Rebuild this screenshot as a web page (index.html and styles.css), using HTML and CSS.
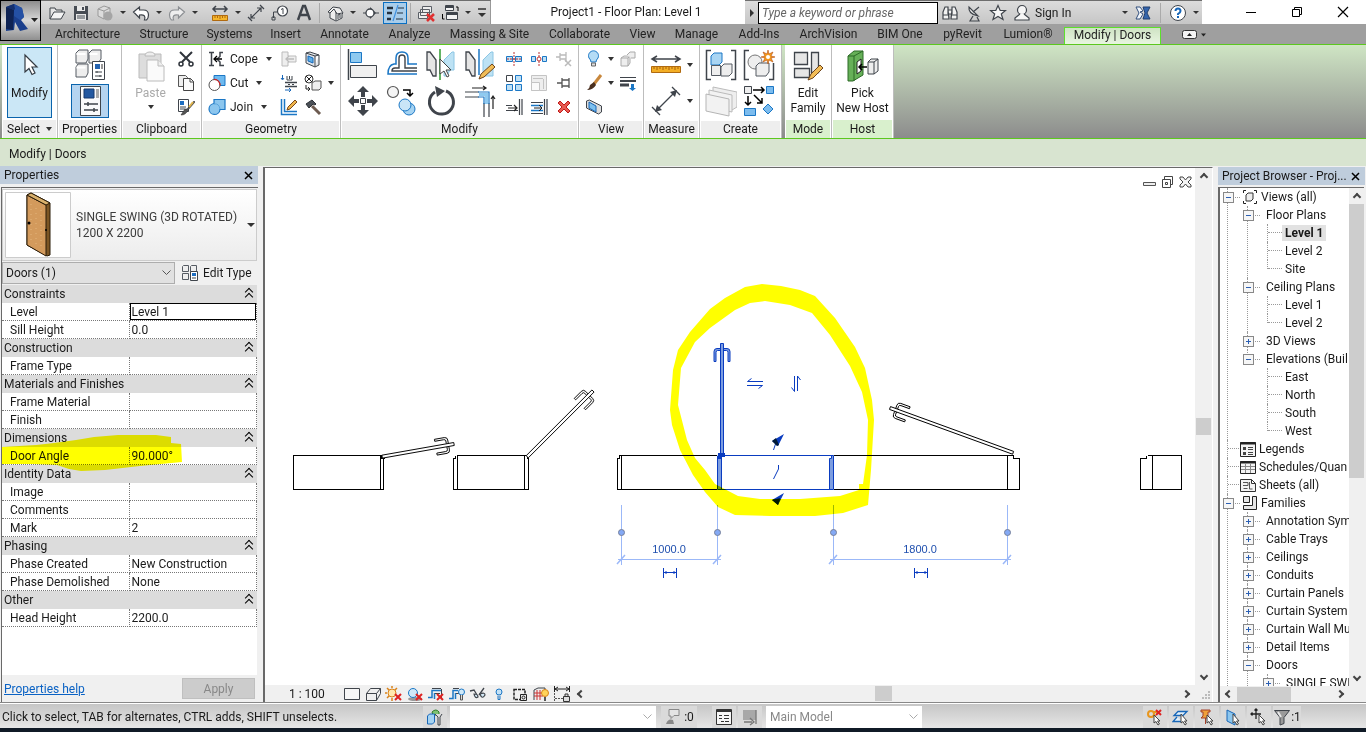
FILE: index.html
```
<!DOCTYPE html>
<html lang="en">
<head>
  <meta charset="UTF-8" />
  <meta name="viewport" content="width=device-width, initial-scale=1.0"/>
  <title>Project1 - Floor Plan: Level 1</title>
  <link rel="stylesheet" href="styles.css">
</head>
<body>
  <header class="top">
    <button class="app-button" aria-label="Application menu">
      <svg width="39" height="39" viewBox="0 0 39 39">
        <path d="M5 6l8-3 8 4 2 9-3 3 7 9-8 2-5-9-1 8-8 1z" fill="#1b3f8c"/>
        <path d="M5 6l8 3-1 20-7-1z" fill="#0f2353"/>
        <path d="M13 3l8 4 2 9-4 3-6-4z" fill="#2450a4"/>
        <path d="M5 6l8-3 1 5-1 1z" fill="#14306e"/>
        <path d="M30 17h7l-3.500 4z" fill="#222"/>
      </svg>
    </button>

    <div class="title-bar">
      <div class="quick">
        <button aria-label="Open"><svg class="i18" viewBox="0 0 18 18"><path d="M2 15V4h5l1 2h6v2" fill="#e6e6e6" stroke="#3f444b"/><path d="M2 15l4-7h11l-4 7z" fill="#f4f4f4" stroke="#3f444b"/></svg></button>
        <button aria-label="Save"><svg class="i18" viewBox="0 0 18 18"><path d="M2 2h14v14H2z" fill="#474c54"/><path d="M5 2h8v5H5zM4 10h10v6H4z" fill="#e9e9e9"/><path d="M5 12h8M5 14h8" stroke="#474c54"/><path d="M10 3h2v3h-2z" fill="#474c54"/></svg></button>
        <button aria-label="Synchronize"><svg class="i18" viewBox="0 0 18 18"><path d="M2 5l6-3 6 2v7l-6 4-6-3z" fill="#dcdcdc" stroke="#999"/><path d="M2 5l6 2 6-3M8 7v8" fill="none" stroke="#999"/><circle cx="12" cy="12" r="4.500" fill="#a5a5a5"/></svg></button>
        <button class="arr" aria-label="Synchronize options"></button>
        <button aria-label="Undo"><svg class="i18" viewBox="0 0 18 18"><path d="M1.500 8l6-5v3h4q5 0 5 5 0 3-2 5h-2q2-6-5-5v3z" fill="#fff" stroke="#3f444b" stroke-width="1.200"/></svg></button>
        <button class="arr" aria-label="Undo list"></button>
        <button aria-label="Redo"><svg class="i18" viewBox="0 0 18 18"><path d="M16.500 8l-6-5v3h-4q-5 0-5 5 0 3 2 5h2q-2-6 5-5v3z" fill="#eee" stroke="#8c8f93" stroke-width="1.200"/></svg></button>
        <button class="arr" aria-label="Redo list"></button>
        <span class="sep blank"></span>
        <button aria-label="Measure"><svg class="i18" viewBox="0 0 18 18"><path d="M2 5h14M5 2L2 5l3 3M13 2l3 3-3 3" fill="none" stroke="#3f444b" stroke-width="1.500"/><path d="M1.500 11.500h15v5h-15z" fill="#f5b62c" stroke="#b06a10"/><path d="M4 12v2M6.500 12v2M9 12v3M11.500 12v2M14 12v2" stroke="#b06a10"/></svg></button>
        <button class="arr" aria-label="Measure options"></button>
        <button aria-label="Aligned Dimension"><svg class="i18" viewBox="0 0 18 18"><path d="M4 14L14 4M1 13l4 4M13 1l4 4M4 10v4h4M10 4h4v4" fill="none" stroke="#3f444b" stroke-width="1.200"/></svg></button>
        <button aria-label="Tag by Category"><svg class="i18" viewBox="0 0 18 18"><circle cx="11.500" cy="7" r="5" fill="#fff" stroke="#3f444b" stroke-width="1.200"/><path d="M10 5.500l2-1v5.500" fill="none" stroke="#3f444b"/><path d="M6.500 8H2.500v6M1 13h3v3H1z" fill="none" stroke="#3f444b"/></svg></button>
        <button aria-label="Text"><svg class="i18" viewBox="0 0 18 18"><path d="M3 16L8 2h2l5 14M5.500 11h7" fill="none" stroke="#3f444b" stroke-width="2.400"/></svg></button>
        <span class="sep"></span>
        <button aria-label="Default 3D View"><svg class="i18" viewBox="0 0 18 18"><path d="M2 8l5-5 7 1 3 5-1 1v4l-6 3-6-3V9z" fill="#eee" stroke="#3f444b"/><path d="M10 8v8M4 9l4-4 3 5 5-1M12 15v-4l2-1v4" fill="none" stroke="#3f444b"/></svg></button>
        <button class="arr" aria-label="3D options"></button>
        <button aria-label="Section"><svg class="i18" viewBox="0 0 18 18"><path d="M8 3l6 6-6 6z" fill="#3f444b"/><circle cx="8" cy="9" r="4" fill="#fff" stroke="#3f444b" stroke-width="1.300"/><path d="M1 9h3M13 9h4" stroke="#3f444b"/></svg></button>
        <button class="on" aria-label="Thin Lines"><svg class="i18" viewBox="0 0 18 18"><path d="M1 4h6M1 9h5M1 15h4" stroke="#25303c" stroke-width="2.500"/><path d="M12 4h6M11 9h6M10 15h7" stroke="#25303c"/><path d="M12 1L7 17" stroke="#3d8fe0" stroke-width="1.200"/></svg></button>
        <span class="sep"></span>
        <button aria-label="Close Hidden Windows"><svg class="i18" viewBox="0 0 18 18"><path d="M5.500 2.500h9v6h-9zM3.500 5.500h9v6h-9zM1.500 8.500h9v6h-9z" fill="#eee" stroke="#5a5f66"/><path d="M10 10l7 7M17 10l-7 7" stroke="#e03030" stroke-width="2.500"/></svg></button>
        <button aria-label="Switch Windows"><svg class="i18" viewBox="0 0 18 18"><path d="M4.500 1.500h8v5h-8zM5.500 8.500h11v7h-11z" fill="#f4f4f4" stroke="#3f444b"/><path d="M4 3h9M5 10h12" stroke="#3f444b" stroke-width="2"/><path d="M15 3h2v4M1.500 10v5h2" fill="none" stroke="#000"/></svg></button>
        <button class="arr" aria-label="Window list"></button>
        <button class="custom" aria-label="Customize"><svg width="12" height="12" viewBox="0 0 12 12"><path d="M2 2h8" stroke="#333" stroke-width="1.500"/><path d="M2 6h8l-4 4z" fill="#333"/></svg></button>
      </div>
      <h1>Project1 - Floor Plan: Level 1</h1>
      <div class="search">
        <button class="go" aria-label="Expand search"><svg width="6" height="8" viewBox="0 0 6 8"><path d="M1 0l4 4-4 4z" fill="#333"/></svg></button>
        <input type="text" placeholder="Type a keyword or phrase" aria-label="Search help">
        <button aria-label="Search"><svg class="i18" viewBox="0 0 18 18"><path d="M4 3h3v3l1 9H2L2 8zM11 3h3l2 5v7h-6l1-9zM7 6h4v4H7z" fill="#f2f2f2" stroke="#3f444b" stroke-width="1.200"/><path d="M2 11h6M10 11h6" stroke="#3f444b"/></svg></button>
        <button aria-label="Subscription"><svg class="i18" viewBox="0 0 18 18"><path d="M4 3q-1 7 9 9z" fill="#eee" stroke="#3f444b" stroke-width="1.200"/><path d="M8 8l6-5M8 12l-3 5h9l-2-4" fill="none" stroke="#3f444b" stroke-width="1.200"/></svg></button>
        <button aria-label="Favorites"><svg class="i18" viewBox="0 0 18 18"><path d="M9 1.500l2.200 5h5.300l-4.200 3.500 1.700 5.500L9 12.500 4 15.500 5.700 10 1.500 6.500h5.300z" fill="#f6f6f6" stroke="#3f444b" stroke-width="1.200"/></svg></button>
        <button class="sign">
          <svg class="i18" viewBox="0 0 18 18"><circle cx="9" cy="6" r="4.500" fill="#f6f6f6" stroke="#3f444b" stroke-width="1.200"/><path d="M7 10l-5 4v2h14v-2l-5-4" fill="#f6f6f6" stroke="#3f444b" stroke-width="1.200"/></svg>
          Sign In
        </button>
        <button class="arr" aria-label="Account options"></button>
        <button aria-label="Exchange"><svg class="i18" viewBox="0 0 18 18"><path d="M2 3h4l3 4-3 1 3 2-3 5H2l3-6z" fill="#f2f6fb" stroke="#33507e"/><path d="M9 3h7l-3 6 3 6H9l2-6z" fill="#3465ad" stroke="#213f70"/></svg></button>
        <span class="sep"></span>
        <button aria-label="Help"><svg class="i18" viewBox="0 0 18 18"><circle cx="9" cy="9" r="7.500" fill="#fff" stroke="#3f444b"/><path d="M6.500 7q0-2.500 2.500-2.500T11.500 7q0 1.500-2.500 3v1" fill="none" stroke="#1766b8" stroke-width="2"/><path d="M8 12h2v2H8z" fill="#1766b8"/></svg></button>
        <button class="arr" aria-label="Help options"></button>
      </div>
      <div class="window-buttons">
        <button aria-label="Minimize"><svg width="12" height="12" viewBox="0 0 12 12"><path d="M1 6.500h10" stroke="#000"/></svg></button>
        <button aria-label="Restore"><svg width="12" height="12" viewBox="0 0 12 12"><path d="M1.500 3.500h7v7h-7zM3.500 3V1.500h7v7H9" fill="none" stroke="#000"/></svg></button>
        <button aria-label="Close"><svg width="12" height="12" viewBox="0 0 12 12"><path d="M1 1l10 10M11 1L1 11" stroke="#000" stroke-width="1.200"/></svg></button>
      </div>
    </div>

    <nav class="tabs">
      <a href="#">Architecture</a>
      <a href="#">Structure</a>
      <a href="#">Systems</a>
      <a href="#">Insert</a>
      <a href="#">Annotate</a>
      <a href="#">Analyze</a>
      <a href="#">Massing &amp; Site</a>
      <a href="#">Collaborate</a>
      <a href="#">View</a>
      <a href="#">Manage</a>
      <a href="#">Add-Ins</a>
      <a href="#">ArchVision</a>
      <a href="#">BIM One</a>
      <a href="#">pyRevit</a>
      <a href="#">Lumion®</a>
      <a href="#" class="active">Modify | Doors</a>
      <button class="collapse" aria-label="Collapse ribbon"><svg width="26" height="10" viewBox="0 0 26 10"><rect x=".5" y=".5" width="14" height="8" rx="2" fill="#f4f4f4" stroke="#333"/><path d="M5 6h5L7.500 3zM19 3.500h5l-2.500 3z" fill="#222"/></svg></button>
    </nav>
  </header>

  <div class="ribbon">
    <section class="panel p-select">
      <div class="panel-body">
        <button class="big pressed">
          <svg class="i32" viewBox="0 0 32 32"><path d="M11 5v17l4-3.500 3 6 3-1.500-3-6h5z" fill="#fff" stroke="#333a42" stroke-width="1.200"/></svg>
          <span>Modify</span>
        </button>
      </div>
      <h2>Select <i class="caret"></i></h2>
    </section>

    <section class="panel p-props">
      <div class="panel-body stack">
        <button aria-label="Type Properties"><svg class="i32" viewBox="0 0 32 32"><path d="M2 4l3-3h9v9l-2 4H2zM15 4l3-3h9v9l-3 4h-9zM2 18l2-3h10v9l-2 4H2z" fill="#eee" stroke="#555b63"/><path d="M2.500 5h9M15.500 5h8M2.500 18.500h9" fill="none" stroke="#fff" stroke-width="2"/><path d="M18.500 12.500h12v18h-12z" fill="#fff" stroke="#3f444b"/><path d="M21 15h5v5h-5z" fill="#2563b0"/><path d="M27 15h2v5h-2z" fill="#999"/><path d="M21 23h7M21 27h7M23 22v2M26 26v2" stroke="#3f444b"/></svg></button>
        <button class="pressed wide" aria-label="Properties"><svg class="i32" viewBox="0 0 32 32"><path d="M6.500 1.500h20v29h-20z" fill="#fafafa" stroke="#3f444b"/><path d="M10 4h10v9H10z" fill="#2358a0" stroke="#17396c"/><path d="M22 4h3v9h-3z" fill="#aaa"/><path d="M10 19h14M10 25h14M14 17v4M20 23v4" stroke="#3f444b" stroke-width="1.500"/></svg></button>
      </div>
      <h2>Properties</h2>
    </section>

    <section class="panel p-clip">
      <div class="panel-body">
        <button class="big off">
          <svg class="i32" viewBox="0 0 32 32"><path d="M4 4h22v24H4z" fill="#ddd" stroke="#bbb"/><path d="M10 6q0-4 5-4t5 4z" fill="#eee" stroke="#bbb"/><path d="M12 10h11l6 6v15H12z" fill="#fafafa" stroke="#bcbcbc"/><path d="M23 10v6h6" fill="#eee" stroke="#bcbcbc"/></svg>
          <span>Paste</span>
          <i class="caret"></i>
        </button>
        <div class="col">
          <button aria-label="Cut to Clipboard"><svg class="i18" viewBox="0 0 18 18"><path d="M3 2l10 10M15 2L5 12" stroke="#2f343b" stroke-width="2"/><circle cx="4" cy="14" r="2" fill="#fff" stroke="#2f343b" stroke-width="1.500"/><circle cx="14" cy="14" r="2" fill="#fff" stroke="#2f343b" stroke-width="1.500"/></svg></button>
          <button aria-label="Copy to Clipboard"><svg class="i18" viewBox="0 0 18 18"><path d="M1.500 1.500h7l2 2v9h-9z" fill="#eee" stroke="#555"/><path d="M6.500 4.500h7l3 3v9h-10z" fill="#fafafa" stroke="#444"/><path d="M13 4v4h4" fill="none" stroke="#444"/></svg></button>
          <button aria-label="Match Type"><svg class="i18" viewBox="0 0 18 18"><path d="M1.500 1.500h10v12h-10z" fill="#fff" stroke="#3f444b"/><path d="M3 3h4v4H3z" fill="#1d6dc0"/><path d="M3 9h6M3 11h5" stroke="#3f444b"/><path d="M17 3l-7 8-2 0-4 6q5 0 7-5l7-8z" fill="#555" stroke="#333" stroke-width=".6"/><path d="M16 4l-4 5" stroke="#e1b64c" stroke-width="2"/></svg></button>
        </div>
      </div>
      <h2>Clipboard</h2>
    </section>

    <section class="panel p-geo">
      <div class="panel-body">
        <div class="col labelled">
          <button><svg class="i18" viewBox="0 0 18 18"><path d="M1 2.500h5M1 15.500h5M3.500 2v14M15 2.500h-3v4l-3 2.500 3 3v3.500h4" fill="none" stroke="#3f444b" stroke-width="1.500"/><path d="M14 9H6M9 6L6 9l3 3" fill="none" stroke="#000" stroke-width="1.300"/></svg>Cope <i class="caret"></i></button>
          <button><svg class="i18" viewBox="0 0 18 18"><path d="M6 1.500h11v10H6z" fill="#6db9ef" stroke="#1b77c5"/><circle cx="6.500" cy="11" r="5.500" fill="#fff" stroke="#555"/><path d="M6 5.500a5.500 5.500 0 0 1 6 6" fill="none" stroke="#c22" stroke-width="1.300"/></svg>Cut <i class="caret"></i></button>
          <button><svg class="i18" viewBox="0 0 18 18"><path d="M6 1.500h11v10h-5a5.500 5.500 0 1 1-6-6z" fill="#8cc6ee" stroke="#1b77c5" stroke-width="1.200"/><path d="M6 6q5-1 6 5" fill="none" stroke="#5ba6dc"/></svg>Join <i class="caret"></i></button>
        </div>
        <div class="col">
          <button aria-label="Wall Joins"><svg class="i18" viewBox="0 0 18 18"><path d="M2 2h6v4h8v6H8v4H2z" fill="#eee" stroke="#bbb"/><path d="M14 9H7M9 6L6 9l3 3" fill="none" stroke="#bbb" stroke-width="1.300"/></svg></button>
          <button aria-label="Split Face"><svg class="i18" viewBox="0 0 18 18"><path d="M5 8.500h12M5 12.500h12" stroke="#3f444b" stroke-width="1.500"/><path d="M8 10.500h2M12 10.500h2M7 2v4h5V2M9.500 2v3" fill="none" stroke="#3f444b"/><path d="M2.500 1v4M1 4l1.500 2L4 4M5 16h5M9 14l2 2-2 2" fill="none" stroke="#1766b8"/></svg></button>
          <button aria-label="Paint"><svg class="i18" viewBox="0 0 18 18"><path d="M1.500 1v15.500H17M4.500 1v12.500H17" fill="none" stroke="#1b77c5" stroke-width="1.500"/><path d="M7 12l1-3 7-7 2 2-7 7z" fill="#f0b54a" stroke="#7a4a1a"/></svg></button>
        </div>
        <div class="col">
          <button aria-label="Wall Opening"><svg class="i18" viewBox="0 0 18 18"><path d="M2 3l9 3V17L2 13zM2 3l4-1 9 3-4 1M15 5v10l-4 2" fill="#dfe3e8" stroke="#3f444b"/><path d="M4 6l5 2v5l-5-2z" fill="#5fb0ea" stroke="#1766b8"/></svg></button>
          <button aria-label="Beam joins"><svg class="i18" viewBox="0 0 18 18"><circle cx="5" cy="5" r="4" fill="#fff" stroke="#333"/><path d="M2 2l6 6M8 2L2 8M2 11v4h3M4 13l2 2-2 2" fill="none" stroke="#222"/><path d="M8 9l3-2h6v7l-2 2H8z" fill="#eee" stroke="#555"/></svg></button>
          <button aria-label="Demolish"><svg class="i18" viewBox="0 0 18 18"><path d="M2 6l6-4 4 4-1 1-2-1-4 4z" fill="#4a4f56" stroke="#2e3238"/><path d="M8 8l8 8" stroke="#6d5b50" stroke-width="3"/></svg></button>
        </div>
        <i class="caret side"></i>
      </div>
      <h2>Geometry</h2>
    </section>

    <section class="panel p-modify">
      <div class="panel-body">
        <div class="big-grid four">
          <button aria-label="Align"><svg class="i32" viewBox="0 0 32 32"><path d="M1.500 0v31" stroke="#3f444b" stroke-width="1.500"/><path d="M3.500 3.500h11v10h-11z" fill="#8fcaf0" stroke="#1b77c5"/><path d="M3.500 16.500h26v12h-26z" fill="#f0f0f0" stroke="#3f444b"/></svg></button>
          <button aria-label="Offset"><svg class="i32" viewBox="0 0 32 32"><path d="M31 15h-9V9q0-6-6-6t-6 6v6H8q-6 1-6 10h29" fill="none" stroke="#1b77c5" stroke-width="1.500"/><path d="M31 19H19V9q0-3-3-3t-3 3v10h-4q-3 0-3 3h25" fill="none" stroke="#3f444b" stroke-width="1.400"/></svg></button>
          <button aria-label="Mirror - Pick Axis"><svg class="i32" viewBox="0 0 32 32"><path d="M2 3h3l6 8v16H8l-3-6H2z" fill="#e5e5e5" stroke="#3f444b" stroke-width="1.300"/><path d="M29 3h-2l-8 8v16h3l3-6h4z" fill="#bde2f4" stroke="#8cc6e4"/><path d="M15 0v31" stroke="#2f9b30" stroke-width="1.500"/><path d="M15 10v15l4-3 3 6 2-1-3-6h5z" fill="#fff" stroke="#444"/></svg></button>
          <button aria-label="Mirror - Draw Axis"><svg class="i32" viewBox="0 0 32 32"><path d="M2 3h3l6 8v16H8l-3-6H2z" fill="#e5e5e5" stroke="#3f444b" stroke-width="1.300"/><path d="M29 3h-2l-8 8v16h10z" fill="#bde2f4" stroke="#8cc6e4"/><path d="M15 0v26" stroke="#1b77c5" stroke-width="1.500"/><path d="M15 30l2-5 11-10 3 3-11 10z" fill="#f2bd57" stroke="#70451c"/></svg></button>
          <button aria-label="Move"><svg class="i32" viewBox="0 0 32 32"><path d="M16 1l6 6h-4v5h-4V7h-4zM16 31l6-6h-4v-5h-4v5h-4zM1 16l6-6v4h5v4H7v4zM31 16l-6-6v4h-5v4h5v4z" fill="#3f444b"/><path d="M13.500 13.500h5v5h-5z" fill="#fff" stroke="#3f444b"/></svg></button>
          <button aria-label="Copy"><svg class="i32" viewBox="0 0 32 32"><circle cx="7" cy="7" r="5.500" fill="#f4f4f4" stroke="#555" stroke-width="1.200"/><circle cx="23" cy="24" r="6" fill="#a5d3f2" stroke="#1b77c5"/><circle cx="19" cy="20" r="6" fill="#c9e5f7" stroke="#1b77c5"/><path d="M17 5h7v6M21 8l3 3 3-3" fill="none" stroke="#000" stroke-width="1.500"/></svg></button>
          <button aria-label="Rotate"><svg class="i32" viewBox="0 0 32 32"><path d="M10 7a12 12 0 1 0 11-1" fill="none" stroke="#3f444b" stroke-width="3"/><path d="M10 1l10 5-8 6z" fill="#3f444b"/></svg></button>
          <button aria-label="Trim/Extend to Corner"><svg class="i32" viewBox="0 0 32 32"><path d="M1 7h14M1 12h14M20 18v14M25 18v14" stroke="#3f444b" stroke-width="1.200"/><path d="M14 7h11v12M14 12h6v7" fill="none" stroke="#1b77c5" stroke-width="1.200"/><path d="M15 9.500h7.500V19" fill="none" stroke="#8fcaf0" stroke-width="3"/><path d="M8 3h14M19 1l3 2-3 2M29 24V11M27 14l2-3 2 3" fill="none" stroke="#222" stroke-width="1.200"/></svg></button>
        </div>
        <div class="small-grid">
          <button aria-label="Split Element"><svg class="i18" viewBox="0 0 18 18"><path d="M1.500 6.500h6v5h-6zM10.500 6.500h6v5h-6z" fill="#bfe0f5" stroke="#1b77c5"/><path d="M9 2v14M2 9h14" stroke="#b33" stroke-dasharray="2 1"/></svg></button>
          <button aria-label="Split with Gap"><svg class="i18" viewBox="0 0 18 18"><path d="M1.500 6.500h4v5h-4zM12.500 6.500h4v5h-4z" fill="#bfe0f5" stroke="#1b77c5"/><path d="M9 2v14" stroke="#b33" stroke-dasharray="2 1"/><circle cx="9" cy="9" r="2" fill="#fff" stroke="#b33"/></svg></button>
          <button aria-label="Unpin"><svg class="i18" viewBox="0 0 18 18"><path d="M1 7h4M5 3v8M5 5h6M5 9h6M11 2v10" fill="none" stroke="#bbb" stroke-width="1.300"/><path d="M10 10l6 6M16 10l-6 6" stroke="#bbb" stroke-width="1.500"/></svg></button>
          <button aria-label="Array"><svg class="i18" viewBox="0 0 18 18"><path d="M1.500 1.500h6v6h-6z" fill="#fff" stroke="#3f444b"/><path d="M10.500 1.500h6v6h-6zM1.500 10.500h6v6h-6zM10.500 10.500h6v6h-6z" fill="#bfe0f5" stroke="#1b77c5"/></svg></button>
          <button aria-label="Scale"><svg class="i18" viewBox="0 0 18 18"><path d="M1.500 1.500h15v15h-15z" fill="#eee" stroke="#c4c4c4"/><path d="M1.500 8.500h8v8h-8zM3 4.500h10M13.500 5v10" fill="#fafafa" stroke="#c4c4c4"/></svg></button>
          <button aria-label="Pin"><svg class="i18" viewBox="0 0 18 18"><path d="M2 9h5M7 4v10M7 6h7M7 12h7M14 4v10" fill="none" stroke="#555" stroke-width="1.300"/></svg></button>
          <button aria-label="Trim/Extend Single"><svg class="i18" viewBox="0 0 18 18"><path d="M1 7.500h6M1 12.500h12M14.500 1v16M17 1v16" stroke="#3f444b" stroke-width="1.200"/><path d="M3 10h8M9 7l3 3-3 3" fill="none" stroke="#222" stroke-width="1.200"/></svg></button>
          <button aria-label="Trim/Extend Multiple"><svg class="i18" viewBox="0 0 18 18"><path d="M1 4.500h12M1 15.500h12M14.500 1v16M17 1v16" stroke="#3f444b" stroke-width="1.200"/><path d="M1 7.500h12M1 12.500h12" stroke="#1b77c5" stroke-width="1.500"/><path d="M4 10h7M9 7l3 3-3 3" fill="none" stroke="#222"/></svg></button>
          <button aria-label="Delete"><svg class="i18" viewBox="0 0 18 18"><path d="M3 5l2-2 4 4 4-4 2 2-4 4 4 4-2 2-4-4-4 4-2-2 4-4z" fill="#e85a50" stroke="#c01a1a"/></svg></button>
        </div>
      </div>
      <h2>Modify</h2>
    </section>

    <section class="panel p-view">
      <div class="panel-body">
        <div class="col">
          <button aria-label="Hide in View"><svg class="i18" viewBox="0 0 18 18"><path d="M6 12q0-2-2-4a5 5 0 1 1 9 0q-2 2-2 4z" fill="#b4dcf6" stroke="#1b77c5"/><path d="M6.500 13h4v3h-4z" fill="#ddd" stroke="#666"/></svg></button>
          <button aria-label="Override Graphics"><svg class="i18" viewBox="0 0 18 18"><path d="M16 1l-7 9" stroke="#c8873c" stroke-width="3"/><path d="M9 8l2 3q-3 5-9 5 3-2 3-5z" fill="#4a3020"/></svg></button>
          <button aria-label="Selection Box"><svg class="i18" viewBox="0 0 18 18"><path d="M1.500 3l3-1 12 6v6l-3 2-12-6z" fill="#ddd" stroke="#3f444b"/><path d="M4 4l7 4v6l-7-4z" fill="#7dc0ee" stroke="#1766b8"/></svg></button>
        </div>
        <div class="carets"><i class="caret"></i><i class="caret"></i></div>
        <div class="col">
          <button aria-label="Displace"><svg class="i18" viewBox="0 0 18 18"><path d="M2 8l3-2h6v7l-2 3H2zM2 8h7v8M9 8l2-2" fill="#eee" stroke="#aaa"/><path d="M8 5l3-3h5v6h-4" fill="#eee" stroke="#aaa"/></svg></button>
          <button aria-label="Linework"><svg class="i18" viewBox="0 0 18 18"><path d="M1 3.500h16" stroke="#3f444b"/><path d="M1 7h16" stroke="#3f444b" stroke-width="2"/><path d="M1 11h9" stroke="#3f444b" stroke-width="3"/><path d="M12 10h3v4h2l-3.500 3-3.500-3h2z" fill="#1b77c5"/></svg></button>
        </div>
      </div>
      <h2>View</h2>
    </section>

    <section class="panel p-measure">
      <div class="panel-body">
        <div class="big-grid">
          <button aria-label="Measure distance"><svg class="i32" viewBox="0 0 32 32"><path d="M2 10h28M7 7l-5 3 5 3M25 7l5 3-5 3" fill="none" stroke="#3f444b" stroke-width="1.500"/><path d="M1.500 17.500h29v6h-29z" fill="#f3ae25" stroke="#b06a10"/><path d="M4 18v2M7 18v3M10 18v2M13 18v3M16 18v2M19 18v3M22 18v2M25 18v3M28 18v2" stroke="#a55f0a"/></svg></button>
          <button aria-label="Dimension"><svg class="i32" viewBox="0 0 32 32"><path d="M6 26L26 6M2 22l8 8M22 2l8 8" stroke="#3f444b" stroke-width="1.300"/><path d="M5 27l2-7 5 5zM27 5l-7 2 5 5z" fill="#3f444b"/></svg></button>
        </div>
        <div class="carets"><i class="caret"></i><i class="caret"></i></div>
      </div>
      <h2>Measure</h2>
    </section>

    <section class="panel p-create">
      <div class="panel-body">
        <div class="big-grid two">
          <button aria-label="Create Group"><svg class="i32" viewBox="0 0 32 32"><path d="M6 1.500H1.500v29H6M26 1.500h4.500v29H26" fill="none" stroke="#3f444b" stroke-width="1.500"/><path d="M6 7l3-3h8v9l-3 3H6z" fill="#a9d5f3" stroke="#1b77c5"/><path d="M6.500 16.500h9v10h-9zM16 18l3-3h8v9l-3 3h-8z" fill="#eee" stroke="#555b63"/></svg></button>
          <button aria-label="Create Similar"><svg class="i32" viewBox="0 0 32 32"><path d="M6 1.500H1.500v29H6M26 30.500h4.500V14" fill="none" stroke="#3f444b" stroke-width="1.500"/><circle cx="12" cy="13" r="7" fill="#eee" stroke="#777"/><path d="M13 17l3-3h10v9l-3 4H13z" fill="#eee" stroke="#555b63"/><path d="M25 1l1 4 4-2-2 4 4 1-4 1 2 4-4-2-1 4-1-4-4 2 2-4-4-1 4-1-2-4 4 2z" fill="#f59a1c" stroke="#b64d10" stroke-width=".6"/><circle cx="25" cy="8" r="2" fill="#fff"/></svg></button>
          <button aria-label="Create Assembly"><svg class="i32" viewBox="0 0 32 32"><path d="M8 2l24 5v15l-5 3L8 20z" fill="#eee" stroke="#bbb"/><path d="M4 5l23 5v17l-23-5z" fill="#f2f2f2" stroke="#bbb"/><path d="M1 9l23 5v17L1 26z" fill="#f2f2f2" stroke="#b5b5b5"/></svg></button>
          <button aria-label="Create Parts"><svg class="i32" viewBox="0 0 32 32"><path d="M1.500 1.500h7v7h-7z" fill="#eee" stroke="#3f444b"/><path d="M23.500 1.500h7v7h-7zM1.500 23.500h11v7h-11zM25 19l5 5-5 5-5-5z" fill="#7cbcee" stroke="#1b77c5"/><path d="M10 5h11M18 2l3 3-3 3M5 11v9M2 17l3 3 3-3M11 10l8 8M19 13v5h-5" fill="none" stroke="#000" stroke-width="1.500"/></svg></button>
        </div>
      </div>
      <h2>Create</h2>
    </section>

    <section class="panel green p-mode">
      <div class="panel-body">
        <button class="big">
          <svg class="i32" viewBox="0 0 32 32"><path d="M2.500 2.500h13v12h-13zM19.500 2.500h7v20h-7zM2.500 18.500h15v9h-15z" fill="#e6e6e6" stroke="#3f444b" stroke-width="1.300"/><path d="M16 30l3-6 9-9 3 3-10 10z" fill="#f2bd57" stroke="#70451c"/></svg>
          <span>Edit<br>Family</span>
        </button>
      </div>
      <h2>Mode</h2>
    </section>

    <section class="panel green p-host">
      <div class="panel-body">
        <button class="big">
          <svg class="i32" viewBox="0 0 32 32"><path d="M1 6l6-5h9v24l-10 6H1z" fill="#66b058" stroke="#2c6b26"/><path d="M1 6h6v25M7 6l9-5" fill="none" stroke="#2c6b26"/><path d="M10 12l4-3v12l-4 3z" fill="#fff" stroke="#222"/><path d="M20 17h-8M15 14l-3 3 3 3" fill="none" stroke="#000" stroke-width="1.500"/><path d="M21 12l3-3h7v12l-4 3h-6z" fill="#eee" stroke="#3f444b"/><path d="M21 12h6v12M27 12l4-3" fill="none" stroke="#3f444b"/></svg>
          <span>Pick<br>New Host</span>
        </button>
      </div>
      <h2>Host</h2>
    </section>
  </div>

  <div class="options-bar">Modify | Doors</div>

  <main class="work">
    <aside class="palette">
      <div class="palette-title">Properties <button aria-label="Close Properties"><svg width="9" height="9" viewBox="0 0 9 9"><path d="M1 1l7 7M8 1L1 8" stroke="#000" stroke-width="1.500"/></svg></button></div>
      <div class="palette-box">
        <button class="type-selector">
          <svg width="66" height="66" viewBox="0 0 66 66"><path d="M.5 .5h65v65H.5z" fill="#fff" stroke="#ccc"/><path d="M22 3l4-2 19 10v52l-3 1-20-11z" fill="#7b5524" stroke="#2b1c08"/><path d="M22 3l19 10v51L22 53z" fill="#d39a5c" stroke="#2b1c08"/><path d="M22 3l4-2 19 10-4 2z" fill="#d8b06c" stroke="#2b1c08"/><path d="M26 12v38M31 16v36M36 18v38" stroke="#e3b57d" stroke-dasharray="1 4"/><circle cx="24" cy="31" r="1.500"/><circle cx="41" cy="38" r="1"/></svg>
          <span>SINGLE SWING (3D ROTATED)<br>1200 X 2200</span>
          <i class="caret"></i>
        </button>
        <div class="filter-row">
          <div class="combo">
            <select aria-label="Properties filter"><option>Doors (1)</option></select>
            <svg width="9" height="6" viewBox="0 0 9 6"><path d="M.5 .5l4 4 4-4" fill="none" stroke="#555"/></svg>
          </div>
          <button class="edit-type">
            <svg class="i18" viewBox="0 0 18 18"><path d="M1.500 2.500l1-1h5v6h-6zM9.500 2.500l1-1h5v6h-6zM1.500 9.500h6v6h-6z" fill="#eee" stroke="#555b63"/><path d="M9.500 7.500h7v9h-7z" fill="#fff" stroke="#3f444b"/><path d="M11 9h4v3h-4z" fill="#1d6dc0"/><path d="M11 14h4" stroke="#3f444b"/></svg>
            Edit Type
          </button>
        </div>
        <div class="props-scroll">
          <table class="props">
            <tr class="group"><th colspan="2">Constraints <button aria-label="Collapse Constraints"></button></th></tr>
            <tr><td><label for="level">Level</label></td><td><input id="level" class="focus" value="Level 1"></td></tr>
            <tr><td><label for="sill">Sill Height</label></td><td><input id="sill" value="0.0"></td></tr>
            <tr class="group"><th colspan="2">Construction <button aria-label="Collapse Construction"></button></th></tr>
            <tr><td><label for="frame-type">Frame Type</label></td><td><input id="frame-type"></td></tr>
            <tr class="group"><th colspan="2">Materials and Finishes <button aria-label="Collapse Materials"></button></th></tr>
            <tr><td><label for="frame-mat">Frame Material</label></td><td><input id="frame-mat"></td></tr>
            <tr><td><label for="finish">Finish</label></td><td><input id="finish"></td></tr>
            <tr class="group"><th colspan="2">Dimensions <button aria-label="Collapse Dimensions"></button></th></tr>
            <tr><td><label for="angle">Door Angle</label></td><td><input id="angle" value="90.000°"></td></tr>
            <tr class="group"><th colspan="2">Identity Data <button aria-label="Collapse Identity Data"></button></th></tr>
            <tr><td><label for="image">Image</label></td><td><input id="image"></td></tr>
            <tr><td><label for="comments">Comments</label></td><td><input id="comments"></td></tr>
            <tr><td><label for="mark">Mark</label></td><td><input id="mark" value="2"></td></tr>
            <tr class="group"><th colspan="2">Phasing <button aria-label="Collapse Phasing"></button></th></tr>
            <tr><td><label for="created">Phase Created</label></td><td><input id="created" value="New Construction"></td></tr>
            <tr><td><label for="demolished">Phase Demolished</label></td><td><input id="demolished" value="None"></td></tr>
            <tr class="group"><th colspan="2">Other <button aria-label="Collapse Other"></button></th></tr>
            <tr><td><label for="head">Head Height</label></td><td><input id="head" value="2200.0"></td></tr>
          </table>
          <svg class="marker" width="184" height="40" viewBox="0 0 184 40"><path d="M0 14l34-2 18-2 22-3 18-3 24-2h38l15 2v6l10 1 1 18-42 4-35 4-24 1-12-2-12-4-24-1H0z" fill="#ff0"/></svg>
        </div>
        <div class="palette-foot">
          <a href="#">Properties help</a>
          <button disabled>Apply</button>
        </div>
      </div>
    </aside>

    <section class="view">
      <div class="canvas">
        <svg class="drawing" width="931" height="518" viewBox="265 168 931 518">
          <defs>
            <!-- lever pair, tip of the leaf at the origin, leaf running down -->
            <path id="handle" d="M-1.500 7.500h-3q-1.500 0-1.500 2v9h-2v-10q0-3 3-3h10q3 0 3 3v10h-2v-9q0-2-1.500-2h-3"/>
          </defs>
          <g fill="none" stroke="#000" shape-rendering="crispEdges">
            <path d="M293.500 455.500h90v34h-90zM380.500 456v33"/>
            <path d="M456.500 455.500h71v3h1v31h-75v-31h2v-3M457.500 456v33M524.500 456v33"/>
            <path d="M717 455.500h-98v3h-1.500v31H717M621.500 456v33"/>
            <path d="M834 455.500h179.500v3h6v31H834M1007.500 456v33"/>
            <path d="M1147.500 455.500h34v34h-41v-31h6v-3M1152.500 456v33"/>
          </g>
          <path d="M381 455h4v4h-4z"/>
          <g fill="#fff" stroke="#000" stroke-width=".9">
            <g transform="translate(454 444) rotate(80)"><use href="#handle"/><path d="M-1.500 0h3v73h-3z"/></g>
            <g transform="translate(593 391) rotate(45)"><use href="#handle"/><path d="M-1.500 0h3v93h-3z"/></g>
            <g transform="translate(890 408) rotate(-70)"><use href="#handle"/><path d="M-1.500 0h3v131h-3z"/></g>
          </g>
          <g fill="#7d9de0" stroke="#0a3cc0">
            <path d="M718 455.500h115M718 489.500h115" fill="none"/>
            <path d="M717.500 456h4v33.500h-4zM829.500 458.500h2v-3h2v34h-4z"/>
            <g transform="translate(722 343)"><use href="#handle"/><path d="M-1.500 .5h3v112h-3z"/></g>
          </g>
          <path d="M718 453h7v4h-3v2h-4z" fill="#0a3cc0"/>
          <g fill="none" stroke="#0a3cc0">
            <path d="M763 381.500h-15.500l4-3M747 385.500h15.500l-4 3"/>
            <path d="M794.500 376v15.500l-3-4M797.500 391v-15l3 4"/>
            <path d="M778.500 465v4l-5 10M773.500 450l2-6"/>
          </g>
          <path d="M772 441l12-7-6 12zM772 500l12-7-6 12z" fill="#0a3cc0"/>
          <path d="M772 441l4-3 3 7-2 1zM772 500l8-2-2 7z" fill="#001a38"/>
          <g stroke="#9bb8f8" fill="none">
            <path d="M621.500 505v60M717.500 505v60M833.500 505v60M1007.500 505v60"/>
            <path d="M618 559.500h103M830 559.500h181"/>
            <path d="M617 564l8-9M713 564l8-9M829 564l8-9M1003 564l8-9" stroke-width="1.500"/>
          </g>
          <g fill="#84a9f5" stroke="#76809a">
            <circle cx="621.500" cy="532.500" r="3"/><circle cx="717.500" cy="532.500" r="3"/><circle cx="833.500" cy="532.500" r="3"/><circle cx="1007.500" cy="532.500" r="3"/>
          </g>
          <g class="dim"><text x="669" y="553">1000.0</text><text x="920" y="553">1800.0</text></g>
          <path d="M663.500 568v10M676.500 568v10M664 572.500h12M666 571v3M674 571v3M914.500 568v10M927.500 568v10M915 572.500h12M917 571v3M925 571v3" stroke="#0a3cc0"/>
          <path class="loop" fill="#ff0" fill-rule="evenodd" d="M745 287l17-3 19 2 19 4 15 6 20 22 20 29 10 21 7 32 2 20-3 50-3 35-25 8-28 3h-45l-35-1-17-8-13-15-12-17-13-25-8-25-2-15 3-40 5-20 12-18 20-23 15-11zM765 301l-15 2-15 7-25 18-15 14-14 26-3 37 9 35 8 18 10 12 10 14 23 12 22 3h40l40-3 19-6v-6h4l4-29 1-35-6-28-12-26-20-31-18-22-22-8z"/>
        </svg>
        <div class="mdi">
          <button aria-label="Minimize view"><svg width="13" height="12" viewBox="0 0 13 12"><path d="M.5 6.500h12v3H.5z" fill="#eee" stroke="#555"/></svg></button>
          <button aria-label="Restore view"><svg width="13" height="12" viewBox="0 0 13 12"><path d="M3.500 3V.5h8v8H9M1.500 3.500h8v8h-8zM4.500 6.500h2v2h-2z" fill="none" stroke="#444"/></svg></button>
          <button aria-label="Close view"><svg width="13" height="12" viewBox="0 0 13 12"><path d="M1 1h3l2.500 3L9 1h3v2L9 6l3 3v2H9L6.500 8 4 11H1V9l3-3-3-3z" fill="#f4f4f4" stroke="#444"/></svg></button>
        </div>
      </div>
      <div class="vscroll"><i class="chev up"></i><span class="thumb-v"></span><i class="chev down"></i></div>
      <div class="view-bar">
        <span class="scale">1 : 100</span>
        <button aria-label="Detail Level"><svg class="i18" viewBox="0 0 18 18"><path d="M1.500 3.500h15v11h-15z" fill="#f6f6f6" stroke="#3f444b"/></svg></button>
        <button aria-label="Visual Style"><svg class="i18" viewBox="0 0 18 18"><path d="M2.500 8.500l4-5h10v5l-4 7h-10zM2.500 8.500h10v7M12.500 8.500l4-5" fill="#f0f0f0" stroke="#3f444b"/></svg></button>
        <button aria-label="Sun Path"><svg class="i18" viewBox="0 0 18 18"><circle cx="7" cy="8" r="4" fill="#ffe9b0" stroke="#d9821a"/><path d="M7 1v2M7 13v3M0 8h2M2 3l2 2M12 3l-2 2M2 13l2-2" stroke="#d9821a" stroke-width="1.500"/><path d="M10 9l6 6M16 9l-6 6" stroke="#d22" stroke-width="2"/></svg></button>
        <button aria-label="Shadows"><svg class="i18" viewBox="0 0 18 18"><ellipse cx="9" cy="14" rx="7" ry="2" fill="#999"/><circle cx="7" cy="8" r="4.500" fill="#cfe8f8" stroke="#1b77c5"/><path d="M10 9l6 6M16 9l-6 6" stroke="#d22" stroke-width="2"/></svg></button>
        <button aria-label="Crop View"><svg class="i18" viewBox="0 0 18 18"><path d="M1 12.500h4v-7h10M7.500 14V8" fill="none" stroke="#1b77c5" stroke-width="1.500"/><path d="M5 3.500h9M14.500 4v10M8 8.500h5" stroke="#3f444b"/><path d="M10 9l6 6M16 9l-6 6" stroke="#d22" stroke-width="2"/></svg></button>
        <button aria-label="Show Crop Region"><svg class="i18" viewBox="0 0 18 18"><path d="M1 13.500h4v-8h5M7.500 14V8" fill="none" stroke="#1b77c5" stroke-width="1.500"/><path d="M5 3.500h6M8 8.500h3" stroke="#3f444b"/><circle cx="13.500" cy="7" r="3" fill="#cfe8f8" stroke="#1b77c5"/><path d="M12.500 10v5h2v-5" fill="#ddd" stroke="#555"/></svg></button>
        <button aria-label="Temporary Hide"><svg class="i18" viewBox="0 0 18 18"><path d="M1 6l4-1 3 5M10 10l5-7" fill="none" stroke="#3f444b" stroke-width="1.300"/><path d="M5 9q4 0 4 3-3 2-4-3zM11 9q5-2 5 1-3 5-5-1z" fill="#d5ebf8" stroke="#3f444b" stroke-width="1.200"/></svg></button>
        <button aria-label="Reveal Hidden"><svg class="i18" viewBox="0 0 18 18"><circle cx="9" cy="7" r="3" fill="#c4e2f6" stroke="#1b77c5"/><path d="M8 10.500v4h2v-4" fill="#ddd" stroke="#1b77c5"/></svg></button>
        <button aria-label="Temporary View Properties"><svg class="i18" viewBox="0 0 18 18"><path d="M3 4.500h11v10H3z" fill="none" stroke="#222" stroke-width="1.500" stroke-dasharray="3 1"/><path d="M9.500 9.500h6v6h-6z" fill="#eee" stroke="#222"/><circle cx="12.500" cy="12.500" r="1.500" fill="none" stroke="#222"/></svg></button>
        <button aria-label="Analytical Model"><svg class="i18" viewBox="0 0 18 18"><path d="M2 15V5l4-2h7v5" fill="#eee" stroke="#3f444b"/><path d="M2 8h9M5 5v10M8 5v10M2 11h9" stroke="#c33"/><circle cx="13" cy="8" r="3.500" fill="#ffd35a" stroke="#d9821a"/><path d="M12 12h2v4h-2z" fill="#555"/></svg></button>
        <button aria-label="Reveal Constraints"><svg class="i18" viewBox="0 0 18 18"><path d="M1.500 1v6M16.500 1v6M2 4h14M5 2L2 4l3 2M13 2l3 2-3 2" fill="none" stroke="#222"/><path d="M1.500 8v9M2 13.500h8" stroke="#555" stroke-dasharray="2 1"/><path d="M10.500 11.500h6v5h-6zM12 11V9h3v2" fill="#ddd" stroke="#333"/></svg></button>
        <div class="hscroll"><i class="chev left"></i><span class="thumb-h"></span><i class="chev right"></i></div>
        <svg class="grip" width="10" height="10" viewBox="0 0 10 10"><path d="M7 0h2v2H7zM4 3h2v2H4zM7 3h2v2H7zM1 6h2v2H1zM4 6h2v2H4zM7 6h2v2H7z" fill="#bbb"/></svg>
      </div>
    </section>

    <aside class="browser">
      <div class="palette-title">Project Browser - Proj... <button aria-label="Close Project Browser"><svg width="9" height="9" viewBox="0 0 9 9"><path d="M1 1l7 7M8 1L1 8" stroke="#000" stroke-width="1.500"/></svg></button></div>
      <div class="browser-box">
        <div class="tree-view">
          <ul class="tree">
            <li><div class="node open"><svg class="i18" viewBox="0 0 18 18"><path d="M5 2.500H2.500V5M13 2.500h2.500V5M5 15.500H2.500V13M13 15.500h2.500V13" fill="none" stroke="#222"/><path d="M5 7l2-2h5v6l-2 2H5z" fill="#eee" stroke="#333"/></svg>Views (all)</div>
              <ul>
                <li><div class="node open">Floor Plans</div>
                  <ul>
                    <li><div class="node leaf"><b>Level 1</b></div></li>
                    <li><div class="node leaf">Level 2</div></li>
                    <li><div class="node leaf">Site</div></li>
                  </ul>
                </li>
                <li><div class="node open">Ceiling Plans</div>
                  <ul>
                    <li><div class="node leaf">Level 1</div></li>
                    <li><div class="node leaf">Level 2</div></li>
                  </ul>
                </li>
                <li><div class="node closed">3D Views</div></li>
                <li><div class="node open">Elevations (Buil</div>
                  <ul>
                    <li><div class="node leaf">East</div></li>
                    <li><div class="node leaf">North</div></li>
                    <li><div class="node leaf">South</div></li>
                    <li><div class="node leaf">West</div></li>
                  </ul>
                </li>
              </ul>
            </li>
            <li><div class="node leaf"><svg class="i18" viewBox="0 0 18 18"><path d="M1.500 2.500h15v14h-15z" fill="#f4f4f4" stroke="#222"/><path d="M1 3.500h16" stroke="#222" stroke-width="2"/><path d="M4 7h3v3H4zM4 12h3v3H4z" fill="#444"/><path d="M9 7.500h5M9 9.500h5M9 12.500h5M9 14.500h5" stroke="#444"/></svg>Legends</div></li>
            <li><div class="node leaf"><svg class="i18" viewBox="0 0 18 18"><path d="M1.500 3.500h15v12h-15z" fill="#f4f4f4" stroke="#222"/><path d="M1 4.500h16" stroke="#222" stroke-width="2"/><path d="M2 8.500h14M2 11.500h14M6.500 6v9M11.500 6v9" stroke="#888"/></svg>Schedules/Quan</div></li>
            <li><div class="node leaf"><svg class="i18" viewBox="0 0 18 18"><path d="M1.500 3.500h11l4 4v8h-15zM12.500 3.500v4h4" fill="#f4f4f4" stroke="#333"/><path d="M4 6.500h5v3H4M4.500 12.500h4M10.500 6v7h3" fill="none" stroke="#555"/></svg>Sheets (all)</div></li>
            <li class="more"><div class="node open"><svg class="i18" viewBox="0 0 18 18"><path d="M2.500 2.500h6v6h-6zM11.500 2.500h4v13h-13v-4h9z" fill="#e6e6e6" stroke="#222"/></svg>Families</div>
              <ul>
                <li><div class="node closed">Annotation Sym</div></li>
                <li><div class="node closed">Cable Trays</div></li>
                <li><div class="node closed">Ceilings</div></li>
                <li><div class="node closed">Conduits</div></li>
                <li><div class="node closed">Curtain Panels</div></li>
                <li><div class="node closed">Curtain System</div></li>
                <li><div class="node closed">Curtain Wall Mu</div></li>
                <li><div class="node closed">Detail Items</div></li>
                <li class="more"><div class="node open">Doors</div>
                  <ul>
                    <li class="more"><div class="node closed">SINGLE SWI</div></li>
                  </ul>
                </li>
              </ul>
            </li>
          </ul>
        </div>
        <div class="vscroll"><i class="chev up"></i><span class="thumb-v"></span><i class="chev down"></i></div>
        <div class="hscroll"><i class="chev left"></i><span class="thumb-h"></span><i class="chev right"></i></div>
      </div>
    </aside>
  </main>

  <footer class="status">
    <p>Click to select, TAB for alternates, CTRL adds, SHIFT unselects.</p>
    <button class="cell" aria-label="Worksets"><svg class="i18" viewBox="0 0 18 18"><path d="M6 4q4-4 7 0v3H7z" fill="#7fc272" stroke="#2f7a2a"/><path d="M1.500 8l2-2h5v8l-2 2h-5z" fill="#a5d3f2" stroke="#1766b8"/><path d="M9 6l3 3v8h2V9l2-3" fill="#ddd" stroke="#3f444b"/></svg></button>
    <div class="combo workset">
      <select aria-label="Active Workset"><option></option></select>
      <svg width="9" height="6" viewBox="0 0 9 6"><path d="M.5 .5l4 4 4-4" fill="none" stroke="#aaa"/></svg>
    </div>
    <button class="cell requests"><svg class="i18" viewBox="0 0 18 18"><path d="M5 1.500h10v6h-5l-3 3V8H5z" fill="#e4e4e4" stroke="#888"/><path d="M2 16q2-6 7-4l1 4z" fill="#888"/></svg>:0</button>
    <button class="cell" aria-label="Design Options"><svg class="i18" viewBox="0 0 18 18"><path d="M1.500 1.500h15v15h-15z" fill="#f6f6f6" stroke="#333"/><path d="M1 3h16" stroke="#333" stroke-width="2"/><path d="M4 7.500h3M4 10.500h3M6 13.500h3M9 7.500h5M9 10.500h5M10 13.500h4" stroke="#333"/></svg></button>
    <button class="cell" aria-label="Add to Set"><svg class="i18" viewBox="0 0 18 18"><path d="M2 2h13v10H2z" fill="#a8a8a8"/><path d="M3 14h8M9 10l4 4-4 3M15 2v14" fill="none" stroke="#777" stroke-width="1.300"/></svg></button>
    <div class="combo option">
      <select aria-label="Active design option"><option>Main Model</option></select>
      <svg width="9" height="6" viewBox="0 0 9 6"><path d="M.5 .5l4 4 4-4" fill="none" stroke="#aaa"/></svg>
    </div>
    <div class="select-tools">
      <button class="cell" aria-label="Select links"><svg class="i18" viewBox="0 0 18 18"><circle cx="5" cy="6" r="3" fill="none" stroke="#e8961e" stroke-width="2"/><path d="M7 4h4M7 8h3" stroke="#e8961e" stroke-width="2"/><path d="M10 2l5 5M15 2l-5 5" stroke="#d22" stroke-width="2"/><path d="M8 7v8l2-1.500 2 3.500 1.500-1-2-3H14z" fill="#fff" stroke="#444"/></svg></button>
      <button class="cell" aria-label="Select underlay"><svg class="i18" viewBox="0 0 18 18"><path d="M6 3.500h9l-4 4H2zM5 9l-4 4.500h9" fill="#e3f1fb" stroke="#1766b8" stroke-width="1.300"/><path d="M9 6v9l2-1.500 2 3.500 1.500-1-2-3H15z" fill="#fff" stroke="#444"/></svg></button>
      <button class="cell" aria-label="Select pinned"><svg class="i18" viewBox="0 0 18 18"><path d="M3 2h9v2h-2v4l2 2H3l2-2V4H3zM7.500 10v6" fill="#f0a13a" stroke="#a3402a"/><path d="M9 7v8l2-1.500 2 3.500 1.500-1-2-3H15z" fill="#fff" stroke="#444"/></svg></button>
      <button class="cell" aria-label="Select by face"><svg class="i18" viewBox="0 0 18 18"><path d="M3 2l8 4v11l-8-4z" fill="#8cc6ee" stroke="#1766b8"/><path d="M9 6v9l2-1.500 2 3.500 1.500-1-2-3H15z" fill="#fff" stroke="#444"/></svg></button>
      <button class="cell" aria-label="Drag on selection"><svg class="i18" viewBox="0 0 18 18"><path d="M6 1v10M1 6h10M4.500 2.500L6 1l1.500 1.500M2.500 4.500L1 6l1.500 1.500" fill="none" stroke="#222" stroke-width="1.300"/><path d="M9 7v8l2-1.500 2 3.500 1.500-1-2-3H15z" fill="#fff" stroke="#444"/></svg></button>
      <button class="cell filter"><svg class="i18" viewBox="0 0 18 18"><path d="M1.500 2.500h15l-5.500 7v6l-4 1.500V9.500z" fill="#9a9a9a" stroke="#3f444b"/><path d="M5 4l3 5" stroke="#e8e8e8" stroke-width="2"/></svg>:1</button>
    </div>
  </footer>
  <div class="taskbar"></div>
</body>
</html>
```

FILE: styles.css
```
* {
  box-sizing: border-box;
}

body {
  margin: 0;
  height: 100vh;
  display: flex;
  flex-direction: column;
  overflow: hidden;
  font-family: Roboto, "Open Sans", sans-serif;
  font-size: 12px;
  line-height: 16px;
  color: #1a1a1a;
  background: #f0f0f0;
}

button {
  display: flex;
  align-items: center;
  justify-content: center;
  padding: 0;
  border: none;
  background: none;
  font: inherit;
  color: inherit;
}

input, select {
  font: inherit;
  color: inherit;
}

svg {
  display: block;
  flex: none;
}

ul {
  list-style: none;
  margin: 0;
  padding: 0;
}

.i18 {
  width: 18px;
  height: 18px;
}

.i32 {
  width: 32px;
  height: 32px;
}

.caret {
  width: 0;
  height: 0;
  border: 3px solid transparent;
  border-top: 4px solid #333;
  border-bottom: none;
}

/* title bar and tabs */

.top {
  display: grid;
  grid-template-columns: 41px 1fr;
  grid-template-rows: 24px 20px;
  background: #9f9f9f;
}

.app-button {
  grid-row: 1 / 3;
  height: 41px;
  border: 1px solid #000;
  background: linear-gradient(#8d8d8d, #d8d8d8 50%, #8f8f8f);
}

.title-bar {
  display: flex;
  background: #fff;
}

.quick, .search {
  display: flex;
  align-items: center;
  border-top: 1px solid #6e6e6e;
  background: linear-gradient(#dcdcdc, #c6c6c6);
}

.quick {
  padding-left: 4px;
  border-right: 1px solid #999;
}

.search {
  flex: 0 0 457px;
}

.quick button, .search button {
  width: 24px;
  height: 22px;
}

.quick .arr, .search .arr {
  width: 12px;
}

.arr::after {
  content: "";
  border: 3px solid transparent;
  border-top: 3px solid #333;
  border-bottom: none;
}

.quick .on {
  border: 1px solid #0a6fc2;
  background: #a9cdea;
}

.quick .custom {
  width: 16px;
}

.sep {
  width: 1px;
  height: 20px;
  margin: 0 3px;
  background: #aaa;
}

.sep.blank {
  background: none;
}

h1 {
  flex: 1;
  margin: 0;
  padding-left: 16px;
  font-size: 12px;
  font-weight: 400;
  line-height: 24px;
  text-align: center;
  white-space: nowrap;
}

.search .go {
  width: 13px;
}

.search input {
  width: 180px;
  height: 22px;
  padding: 0 3px;
  border: 1px solid #000;
  background: #fff;
}

.search input::placeholder {
  color: #666;
  font-style: italic;
}

.search .sign {
  flex: 1;
  justify-content: flex-start;
  gap: 4px;
  padding-left: 3px;
  white-space: nowrap;
}

.search .sep {
  margin: 0 5px;
}

.window-buttons {
  display: flex;
  padding-left: 26px;
}

.window-buttons button {
  width: 46px;
  height: 23px;
}

.tabs {
  display: grid;
  grid-template-columns: 85px 68px 63px 49px 69px 61px 99px 81px 45px 63px 62px 77px 66px 59px 72px 97px 68px;
  padding-left: 4px;
}

.tabs a {
  color: #222;
  text-align: center;
  text-decoration: none;
  line-height: 21px;
  white-space: nowrap;
}

.tabs .active {
  margin-top: 3px;
  border: 1px solid #5ee02c;
  border-bottom: none;
  line-height: 15px;
  background: linear-gradient(#cfe3c4, #eaf7e2);
}

/* ribbon */

.ribbon {
  display: flex;
  height: 95px;
  padding-left: 2px;
  border: 1px solid #5cc81e;
  border-width: 1px 0;
  background: linear-gradient(#cfe5c4, #8c8c8c);
}

.panel {
  display: flex;
  flex-direction: column;
  border-right: 1px solid #bdbdbd;
  background: #fff;
}

.panel h2 {
  display: flex;
  align-items: center;
  justify-content: center;
  gap: 6px;
  height: 18px;
  margin: 0 1px;
  font-size: 12px;
  font-weight: 400;
  line-height: 17px;
  background: #eee;
}

.panel.green h2 {
  background: #d9f0cd;
}

.panel-body {
  display: flex;
  flex: 1;
  gap: 6px;
  padding: 2px 6px;
}

.p-select { width: 56px; }
.p-props { width: 64px; }
.p-clip { width: 80px; }
.p-geo { width: 139px; }
.p-modify { width: 238px; }
.p-view { width: 65px; }
.p-measure { width: 56px; }
.p-create { width: 82px; }
.p-mode { width: 47px; margin-left: 3px; }
.p-host { width: 62px; }

.big {
  flex: 1;
  flex-direction: column;
  justify-content: flex-start;
  line-height: 15px;
  padding-top: 3px;
  white-space: nowrap;
}

.big span {
  padding-top: 4px;
}

.big .caret {
  margin-top: 4px;
}

.big.off {
  color: #aaa;
}

.pressed {
  border: 1px solid #0a64ad;
  background: #cbe7f6;
}

.p-select .pressed {
  padding-top: 2px;
}

.p-select .panel-body {
  padding: 2px 5px;
}

.stack {
  flex-direction: column;
  align-items: center;
  gap: 2px;
}

.wide {
  width: 38px;
  height: 34px;
  background: #b5d4f0;
}

.p-props .stack button:first-child {
  height: 35px;
}

.col {
  display: flex;
  flex-direction: column;
}

.col button {
  height: 24px;
}

.p-clip .panel-body {
  padding-left: 10px;
  gap: 8px;
}

.p-geo .labelled {
  width: 66px;
}

.labelled button {
  gap: 4px;
  justify-content: flex-start;
}

.labelled .caret {
  margin-left: 4px;
}

.side {
  align-self: center;
}

.big-grid {
  display: grid;
  grid-auto-rows: 36px;
}

.big-grid.two {
  grid-template-columns: 38px 38px;
}

.big-grid.four {
  grid-template-columns: repeat(4, 39px);
}

.small-grid {
  display: grid;
  grid-template-columns: repeat(3, 25px);
  grid-auto-rows: 24px;
}

.p-modify .panel-body {
  padding: 2px 2px;
  gap: 2px;
}

.carets {
  display: flex;
  flex-direction: column;
  gap: 20px;
  padding-top: 10px;
}

.p-view .panel-body {
  gap: 5px;
}

.p-measure .panel-body {
  gap: 5px;
}

.p-measure .carets {
  gap: 32px;
  padding-top: 16px;
}

.p-create .panel-body {
  padding: 2px 2px;
}

.p-mode .panel-body, .p-host .panel-body {
  padding: 2px 0;
}

.options-bar {
  padding: 7px 9px 4px;
  background: #d8e4d0;
}

/* work area */

.work {
  display: grid;
  flex: 1;
  grid-template-columns: 258px 1fr 148px;
  gap: 5px;
  min-height: 0;
  border-bottom: 1px solid #888;
}

.palette, .browser {
  display: flex;
  flex-direction: column;
  min-width: 0;
  min-height: 0;
}

.palette-title {
  display: flex;
  align-items: center;
  justify-content: space-between;
  height: 18px;
  padding: 0 5px 0 4px;
  background: #bfcddc;
  white-space: nowrap;
}

.palette-box {
  display: flex;
  flex: 1;
  flex-direction: column;
  margin: 3px 0 0 1px;
  padding-right: 1px;
  border: 1px solid #696969;
  border-right: none;
  border-bottom: none;
  min-height: 0;
}

.type-selector {
  gap: 5px;
  height: 72px;
  margin-top: 1px;
  padding: 0 1px 0 2px;
  border: 1px solid #ccc;
  background: linear-gradient(#fff, #ececec);
  color: #3c3c3c;
  text-align: left;
  white-space: nowrap;
}

.type-selector span {
  flex: 1;
}

.type-selector .caret {
  border-width: 4px 4px 0;
}

.filter-row {
  display: flex;
  align-items: center;
  gap: 6px;
  height: 24px;
}

.combo {
  position: relative;
}

.combo svg {
  position: absolute;
  right: 4px;
  top: 8px;
}

.combo select {
  display: block;
  width: 100%;
  height: 22px;
  padding: 0 3px;
  border: 1px solid #adadad;
  border-radius: 0;
  background: #e1e1e1;
  appearance: none;
}

.filter-row .combo {
  width: 173px;
}

.edit-type {
  gap: 4px;
  white-space: nowrap;
}

.props-scroll {
  position: relative;
  flex: 1;
  background: #fff;
}

.props {
  width: 100%;
  table-layout: fixed;
  border-spacing: 0;
}

.props th, .props td {
  height: 18px;
  padding: 0;
  font-weight: 400;
  line-height: 16px;
  text-align: left;
}

.props th {
  padding: 0 2px;
  background: #dcdcdc;
}

.props th button {
  float: right;
  flex-direction: column;
  width: 13px;
  height: 16px;
}

.props th button::before,
.props th button::after {
  content: "";
  width: 5px;
  height: 5px;
  margin: 0 0 -1px;
  border: solid #000;
  border-width: 1px 0 0 1px;
  transform: rotate(45deg);
}

.props td {
  border-bottom: 1px dotted #777;
}

.props td:first-child {
  padding-left: 8px;
  border-right: 1px dotted #777;
}

.props td:last-child {
  border-right: 1px dotted #777;
}

.props input {
  display: block;
  width: 100%;
  height: 17px;
  padding: 0 2px;
  border: none;
  background: none;
}

.props .focus {
  padding: 0 1px;
  border: 1px solid #000;
}

.marker {
  position: absolute;
  left: 0;
  top: 148px;
  mix-blend-mode: multiply;
  pointer-events: none;
}

.palette-foot {
  display: flex;
  align-items: center;
  justify-content: space-between;
  height: 27px;
  padding: 0 2px;
}

.palette-foot a {
  color: #0a62c4;
}

.palette-foot button {
  width: 73px;
  height: 21px;
  border: 1px solid #bfbfbf;
  background: #ccc;
  color: #888;
}

.view {
  display: grid;
  grid-template-columns: 1fr 17px;
  grid-template-rows: 1fr 17px;
  margin-top: 1px;
  border-left: 2px solid #696969;
  border-top: 1px solid #696969;
  border-right: 1px solid #fff;
  min-width: 0;
}

.canvas {
  position: relative;
  overflow: hidden;
  background: #fff;
}

.drawing {
  position: absolute;
  left: 0;
  top: 0;
}

.loop {
  mix-blend-mode: multiply;
}

.dim {
  fill: #1f4fae;
  font-family: "Liberation Sans", Arial, sans-serif;
  font-size: 11px;
  text-anchor: middle;
}

.mdi {
  position: absolute;
  top: 8px;
  right: 3px;
  display: flex;
  gap: 5px;
}

.vscroll, .hscroll {
  display: flex;
  align-items: center;
  justify-content: space-between;
  background: #f0f0f0;
}

.vscroll {
  flex-direction: column;
  padding: 6px 0;
}

.hscroll {
  padding: 0 6px;
}

.chev {
  width: 6px;
  height: 6px;
  border: solid #444;
  border-width: 2px 0 0 2px;
}

.up { transform: rotate(45deg); }
.down { transform: rotate(225deg); }
.left { transform: rotate(-45deg); }
.right { transform: rotate(135deg); }

.thumb-v, .thumb-h {
  background: #cdcdcd;
}

.view .thumb-v {
  width: 15px;
  height: 17px;
}

.view .thumb-h {
  width: 17px;
  height: 15px;
}

.view-bar {
  grid-column: 1 / 3;
  display: flex;
  align-items: center;
  background: #f0f0f0;
}

.view-bar button {
  width: 21px;
  height: 16px;
}

.scale {
  width: 76px;
  padding-left: 24px;
  white-space: nowrap;
}

.view-bar .hscroll {
  flex: 1;
  height: 16px;
}

.grip {
  margin: 4px 1px 0 6px;
}

/* project browser */

.browser {
  padding-top: 1px;
}

.browser .palette-title {
  margin-right: 1px;
}

.browser-box {
  display: grid;
  flex: 1;
  grid-template-columns: 1fr 15px;
  grid-template-rows: 1fr 16px;
  margin-top: 2px;
  margin-right: 2px;
  border-left: 2px solid #696969;
  border-top: 1px solid #696969;
  min-height: 0;
}

.tree-view {
  overflow: hidden;
  background: #fff;
  min-height: 0;
}

.tree {
  padding-left: 7px;
}

.tree ul {
  padding-left: 20px;
}

.tree li {
  position: relative;
}

.tree li::before {
  content: "";
  position: absolute;
  left: 0;
  top: 0;
  bottom: 0;
  border-left: 1px dotted #999;
}

.tree li:last-child::before {
  bottom: auto;
  height: 9px;
}

.tree .more::before,
.tree .more:last-child::before {
  height: auto;
  bottom: 0;
}

.node {
  display: flex;
  align-items: center;
  gap: 3px;
  height: 18px;
  padding-left: 1px;
  white-space: nowrap;
}

.node::before {
  content: "";
  flex: none;
  width: 14px;
  height: 1px;
  border-top: 1px dotted #999;
}

.open::before, .closed::before {
  position: relative;
  width: 9px;
  height: 9px;
  margin-left: -5px;
  margin-right: 9px;
  border: 1px solid #888;
  background: linear-gradient(#2b5fb3, #2b5fb3) center / 5px 1px no-repeat #f6f6f6;
}

.closed::before {
  background: linear-gradient(#2b5fb3, #2b5fb3) center / 5px 1px no-repeat, linear-gradient(#2b5fb3, #2b5fb3) center / 1px 5px no-repeat #f6f6f6;
}

.node.open, .node.closed {
  background: repeating-linear-gradient(90deg, #999 0 1px, transparent 1px 2px) 6px 9px / 8px 1px no-repeat;
}

.tree > li > .node {
  gap: 2px;
}

.tree > li > .leaf::before {
  width: 11px;
  margin-right: -2px;
}

.tree > li > .open::before {
  margin-right: 5px;
}

.node b {
  margin-left: -3px;
  padding: 0 3px;
  font-weight: 700;
  background: #e2e2e2;
}

.browser .vscroll {
  justify-content: flex-start;
  gap: 4px;
}

.browser .thumb-v {
  flex: none;
  width: 15px;
  height: 274px;
}

.browser .vscroll .down {
  margin-top: auto;
}

.browser .hscroll {
  grid-column: 1 / 3;
  justify-content: flex-start;
  gap: 5px;
}

.browser .thumb-h {
  width: 54px;
  height: 15px;
}

.browser .right {
  margin-left: auto;
  margin-right: 15px;
}

/* status bar */

.status {
  display: flex;
  align-items: center;
  height: 25px;
  padding-top: 1px;
  border-top: 1px solid #fff;
  background: linear-gradient(#c6c6c6, #e6e6e6);
}

.status p {
  width: 423px;
  margin: 0;
  padding-left: 2px;
  white-space: nowrap;
}

.cell {
  width: 24px;
  height: 22px;
  background: #dadada;
}

.status .combo select {
  border-color: #fff;
  background: #fff;
  color: #888;
}

.workset {
  width: 206px;
  margin-left: 3px;
}

.requests {
  width: 36px;
  gap: 2px;
  margin: 0 15px 0 5px;
}

.status .requests + .cell {
  margin-right: 2px;
}

.option {
  width: 156px;
  margin-left: 4px;
}

.select-tools {
  display: flex;
  gap: 2px;
  margin-left: auto;
  margin-right: 65px;
}

.select-tools .filter {
  width: 28px;
}

.taskbar {
  height: 4px;
  background: #101a26;
}
```
